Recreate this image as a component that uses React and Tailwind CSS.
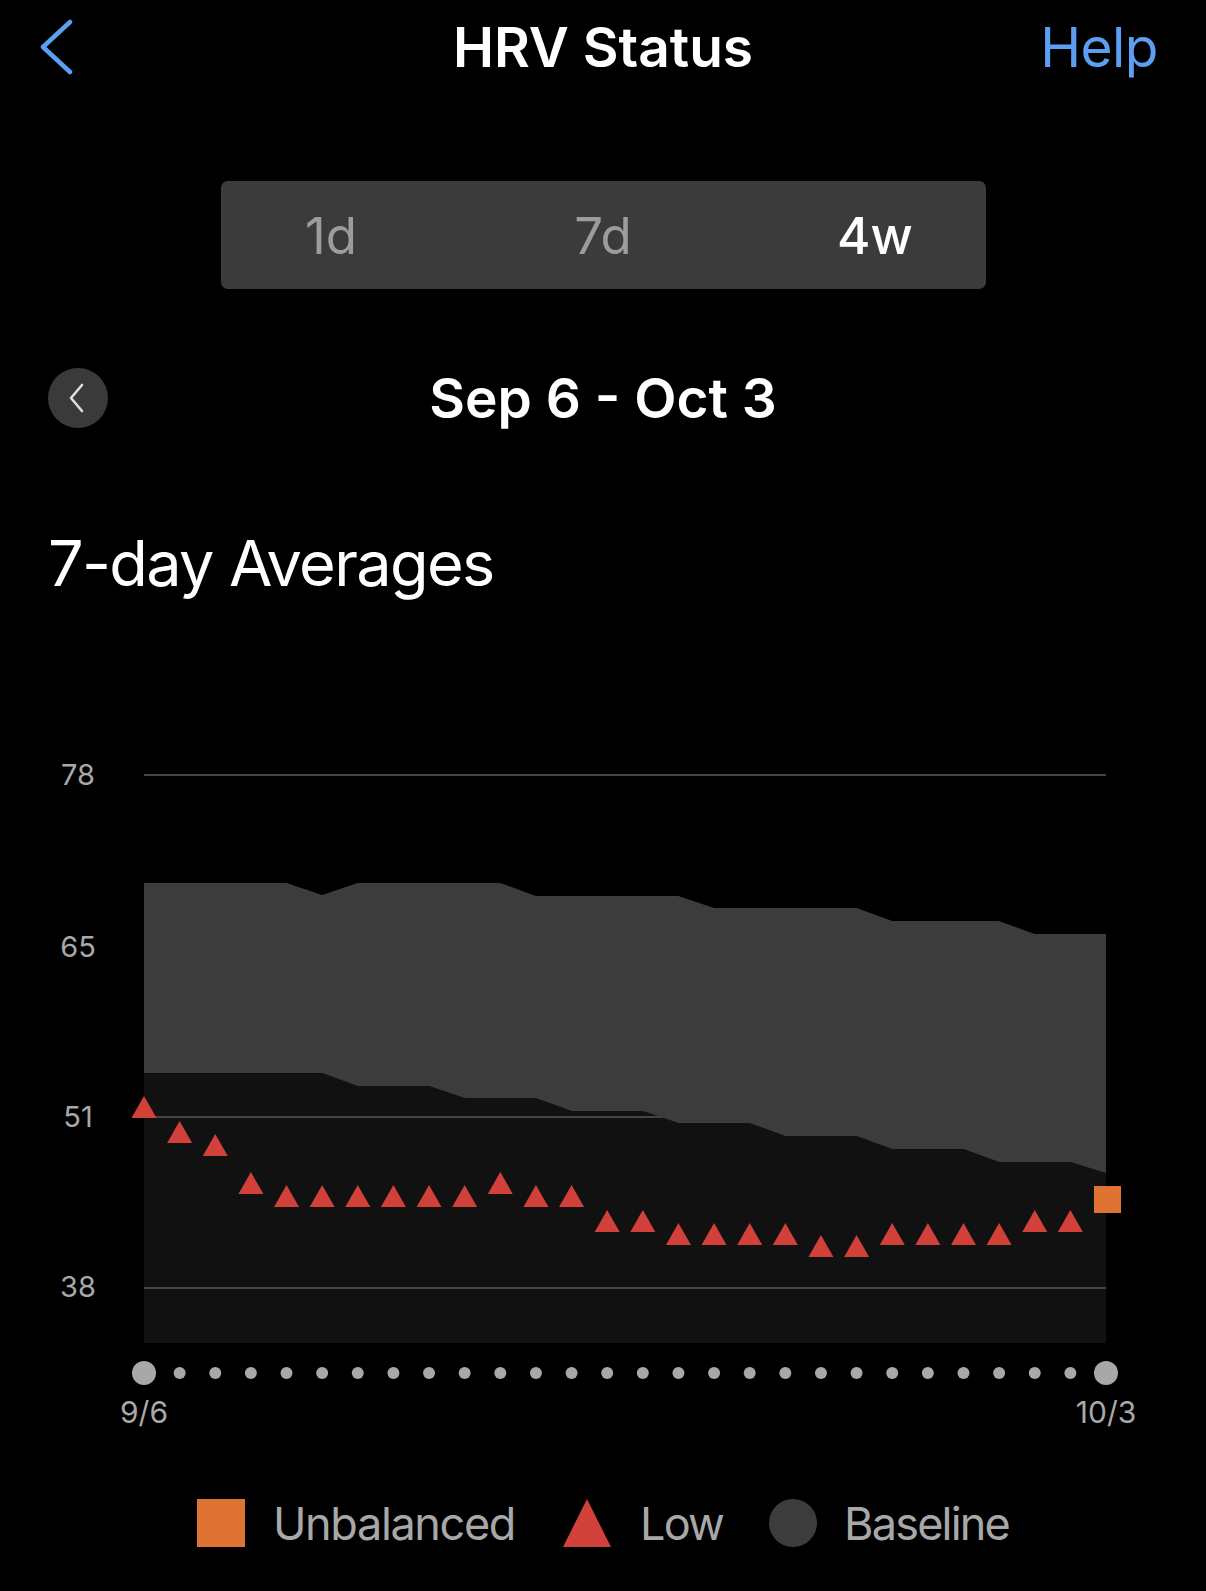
import React from "react";

const FONT = { fontFamily: "Inter, 'Noto Sans', 'Liberation Sans', sans-serif" };

const X0 = 144;
const X1 = 1106;
const OFF = 740;
const xs = (i) => X0 + (i * (X1 - X0)) / 27;

const upper = [883, 883, 883, 883, 883, 895, 883, 883, 883, 883, 883, 896, 896, 896, 896, 896, 908, 908, 908, 908, 908, 921, 921, 921, 921, 934, 934, 934];
const lower = [1073, 1073, 1073, 1073, 1073, 1073, 1086, 1086, 1086, 1098, 1098, 1098, 1111, 1111, 1111, 1123, 1123, 1123, 1136, 1136, 1136, 1149, 1149, 1149, 1162, 1162, 1162, 1173];
const apex = [1096, 1121, 1134, 1172, 1185, 1185, 1185, 1185, 1185, 1185, 1172, 1185, 1185, 1210, 1210, 1223, 1223, 1223, 1223, 1235, 1235, 1223, 1223, 1223, 1223, 1210, 1210];

function Chart() {
  const up = upper.map((v, i) => `${xs(i)},${v - OFF}`);
  const lo = lower.map((v, i) => `${xs(i)},${v - OFF}`);
  const band = [...up, ...lo.slice().reverse()].join(" ");
  const dark = [...lo, `${X1},${1343 - OFF}`, `${X0},${1343 - OFF}`].join(" ");
  const grid = [775, 946, 1117, 1288];
  const labels = [
    ["78", 785],
    ["65", 957],
    ["51", 1127],
    ["38", 1297],
  ];
  return (
    <svg width="1206" height="700" viewBox="0 0 1206 700" className="block" style={FONT}>
      <polygon points={dark} fill="#111111" />
      {grid.map((g) => (
        <rect key={g} x={X0} y={g - OFF - 1} width={X1 - X0} height="2" fill="#454545" />
      ))}
      <polygon points={band} fill="#3c3c3c" />
      {labels.map(([t, b]) => (
        <text key={t} x="78" y={b - OFF} textAnchor="middle" fontSize="29" fill="#a8a8a8">
          {t}
        </text>
      ))}
      {apex.map((a, i) => {
        const x = xs(i);
        const y = a - OFF;
        return <polygon key={i} points={`${x},${y} ${x + 12.5},${y + 22} ${x - 12.5},${y + 22}`} fill="#d2403a" />;
      })}
      <rect x={1094} y={1186 - OFF} width="27" height="27" fill="#e07233" />
      {Array.from({ length: 28 }).map((_, i) => (
        <circle key={i} cx={xs(i)} cy={1373 - OFF} r={i === 0 || i === 27 ? 12 : 6} fill="#a8a8a8" />
      ))}
      <text x={X0} y={1423 - OFF} textAnchor="middle" fontSize="30" fill="#a8a8a8">
        9/6
      </text>
      <text x={X1} y={1423 - OFF} textAnchor="middle" fontSize="30" fill="#a8a8a8">
        10/3
      </text>
    </svg>
  );
}

export default function App() {
  return (
    <div className="w-[1206px] h-[1591px] bg-black overflow-hidden text-white" style={FONT}>
      {/* Header */}
      <div className="grid grid-cols-[1fr_auto_1fr] items-center h-[94px] px-[48px]">
        <div className="flex items-center">
          <svg className="-ml-[10px]" width="36" height="56" viewBox="0 0 36 56">
            <polyline points="32,3 5,28 32,53" fill="none" stroke="#5c9ef2" strokeWidth="4.5" strokeLinecap="round" strokeLinejoin="round" />
          </svg>
        </div>
        <div className="text-[55px] leading-none font-semibold text-white">HRV Status</div>
        <div className="flex justify-end">
          <div className="text-[55px] leading-none text-[#5c9ef2] tracking-[-0.01em]">Help</div>
        </div>
      </div>

      {/* Segmented control */}
      <div className="mt-[87px] mx-auto w-[765px] h-[108px] rounded-[7px] bg-[#3b3b3b] flex items-center justify-center gap-[172px]">
        <div className="w-[100px] text-center text-[51px] leading-none text-[#9c9c9c]">1d</div>
        <div className="w-[100px] text-center text-[51px] leading-none text-[#9c9c9c]">7d</div>
        <div className="w-[100px] text-center text-[51px] leading-none font-medium text-white">4w</div>
      </div>

      {/* Date row */}
      <div className="mt-[79px] h-[60px] grid grid-cols-[1fr_auto_1fr] items-center px-[48px]">
        <div className="flex">
          <div className="w-[60px] h-[60px] rounded-full bg-[#3a3a3a] flex items-center justify-center">
            <svg width="24" height="32" viewBox="0 0 24 32">
              <polyline points="16,3 5,16 16,29" fill="none" stroke="#dedede" strokeWidth="2.6" strokeLinecap="round" strokeLinejoin="round" />
            </svg>
          </div>
        </div>
        <div className="text-[55px] leading-none font-semibold text-white">Sep 6 - Oct 3</div>
        <div />
      </div>

      {/* Section title */}
      <div className="mt-[104px] ml-[48px] text-[63px] leading-none text-white tracking-[-0.026em]">7-day Averages</div>

      {/* Chart */}
      <div className="mt-[145px]">
        <Chart />
      </div>

      {/* Legend */}
      <div className="mt-[59px] h-[48px] flex items-center justify-center">
        <div className="w-[48px] h-[48px] bg-[#e07233]" />
        <div className="ml-[28px] text-[45px] leading-none text-[#a8a8a8] tracking-[-0.03em]">Unbalanced</div>
        <svg className="ml-[48px]" width="48" height="48" viewBox="0 0 48 48">
          <polygon points="24,0 48,48 0,48" fill="#d2403a" />
        </svg>
        <div className="ml-[29px] text-[45px] leading-none text-[#a8a8a8] tracking-[-0.04em]">Low</div>
        <div className="ml-[46px] w-[48px] h-[48px] rounded-full bg-[#3c3c3c]" />
        <div className="ml-[27px] text-[45px] leading-none text-[#a8a8a8] tracking-[-0.04em]">Baseline</div>
      </div>
    </div>
  );
}
